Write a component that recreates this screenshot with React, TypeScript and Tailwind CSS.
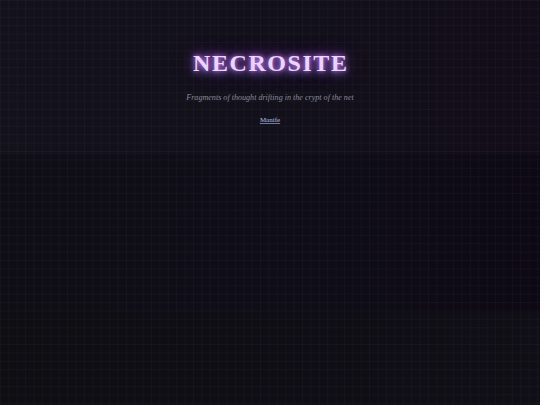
import React from "react";

const grid =
  "bg-[linear-gradient(rgba(140,110,190,0.06)_1px,transparent_1px),linear-gradient(90deg,rgba(140,110,190,0.06)_1px,transparent_1px)] bg-[size:8.4px_8.4px]";

export default function App() {
  return (
    <div className="relative w-[540px] h-[405px] overflow-hidden bg-[#0f0e15] font-['Liberation_Serif',serif]">
      <div className="flex flex-col">
        <header className="h-[155px] flex flex-col items-center bg-[linear-gradient(90deg,#13121a_0%,#121019_60%,#120c18_100%)]">
          <h1 className="mt-[50px] text-[24px] leading-[26px] font-bold tracking-[0.065em] pl-[0.065em] text-[#e8d8ff] [text-shadow:0_0_5px_rgba(220,130,255,1),0_0_12px_rgba(190,80,255,0.8),0_0_24px_rgba(160,60,240,0.45),0_3px_10px_rgba(60,200,200,0.3)]">
            NECROSITE
          </h1>
          <p className="mt-[16px] text-[8.1px] italic text-[#8b8a99]">
            Fragments of thought drifting in the crypt of the net
          </p>
          <nav className="mt-[1px]">
            <a className="text-[7px] text-[#b9c3e4] underline underline-offset-1 decoration-[#6d7aa8]">
              Manife
            </a>
          </nav>
        </header>
        <section className="h-[157px] bg-[linear-gradient(90deg,#0f0e15_0%,#0f0e16_50%,#0d0913_100%)]" />
        <footer className="h-[93px] bg-[linear-gradient(90deg,#0e0e13_0%,#0e0e14_60%,#0f0f15_100%)]" />
      </div>
      <div className={`pointer-events-none absolute inset-0 ${grid}`} />
    </div>
  );
}
